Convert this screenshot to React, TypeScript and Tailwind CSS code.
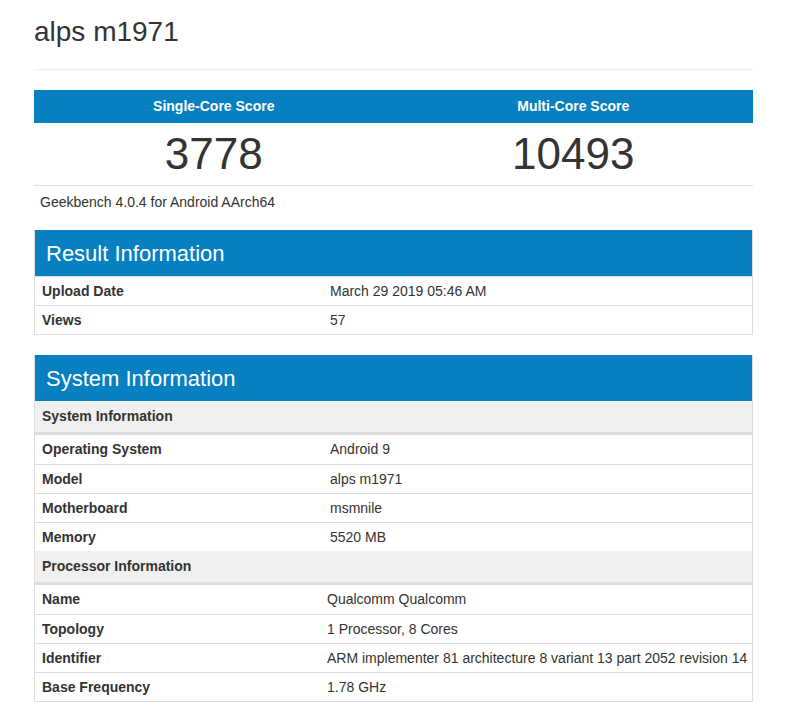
import React from "react";

const F = { fontFamily: '"Liberation Sans", Arial, sans-serif' };

function Row({ k, v, w = "w-[295px]" }: { k: string; v: string; w?: string }) {
  return (
    <div className="flex h-[29px] items-center border-t border-[#dddddd] text-[14px] text-[#333]">
      <div className={`${w} pl-[7px] font-bold shrink-0`}>{k}</div>
      <div>{v}</div>
    </div>
  );
}

function Sub({ t }: { t: string }) {
  return (
    <div className="flex h-[34px] items-center bg-[#f0f0f0] border-b-[3px] border-[#dddddd] pl-[7px] text-[14px] font-bold text-[#333]">
      {t}
    </div>
  );
}

export default function App() {
  return (
    <div style={F} className="bg-white w-[787px] min-h-[725px] px-[34px] pt-[14px] text-[#333]">
      <h1 className="text-[28px] leading-[36px] pb-[19px] border-b border-[#eeeeee]">alps m1971</h1>
      <div className="mt-[20px]">
        <div className="flex h-[33px] bg-[#0780c2] text-white text-[14px] font-bold items-center">
          <div className="flex-1 text-center">Single-Core Score</div>
          <div className="flex-1 text-center">Multi-Core Score</div>
        </div>
        <div className="flex h-[63px] items-center border-b border-[#dddddd] text-[44px]">
          <div className="flex-1 text-center">3778</div>
          <div className="flex-1 text-center">10493</div>
        </div>
        <div className="pl-[6px] pt-[6px] text-[14px]">Geekbench 4.0.4 for Android AArch64</div>
      </div>
      <div className="mt-[17px] border border-[#dddddd] border-t-0">
        <div className="h-[46px] bg-[#0780c2] text-white text-[22px] flex items-center pl-[11px]">Result Information</div>
        <Row k="Upload Date" v="March 29 2019 05:46 AM" />
        <Row k="Views" v="57" />
      </div>
      <div className="mt-[20px] border border-[#dddddd] border-t-0">
        <div className="h-[46px] bg-[#0780c2] text-white text-[22px] flex items-center pl-[11px]">System Information</div>
        <Sub t="System Information" />
        <div className="[&>div:first-child]:border-t-0">
          <Row k="Operating System" v="Android 9" />
          <Row k="Model" v="alps m1971" />
          <Row k="Motherboard" v="msmnile" />
          <Row k="Memory" v="5520 MB" />
        </div>
        <Sub t="Processor Information" />
        <div className="[&>div:first-child]:border-t-0">
          <Row k="Name" v="Qualcomm Qualcomm" w="w-[292px]" />
          <Row k="Topology" v="1 Processor, 8 Cores" w="w-[292px]" />
          <Row k="Identifier" v="ARM implementer 81 architecture 8 variant 13 part 2052 revision 14" w="w-[292px]" />
          <Row k="Base Frequency" v="1.78 GHz" w="w-[292px]" />
        </div>
      </div>
    </div>
  );
}
